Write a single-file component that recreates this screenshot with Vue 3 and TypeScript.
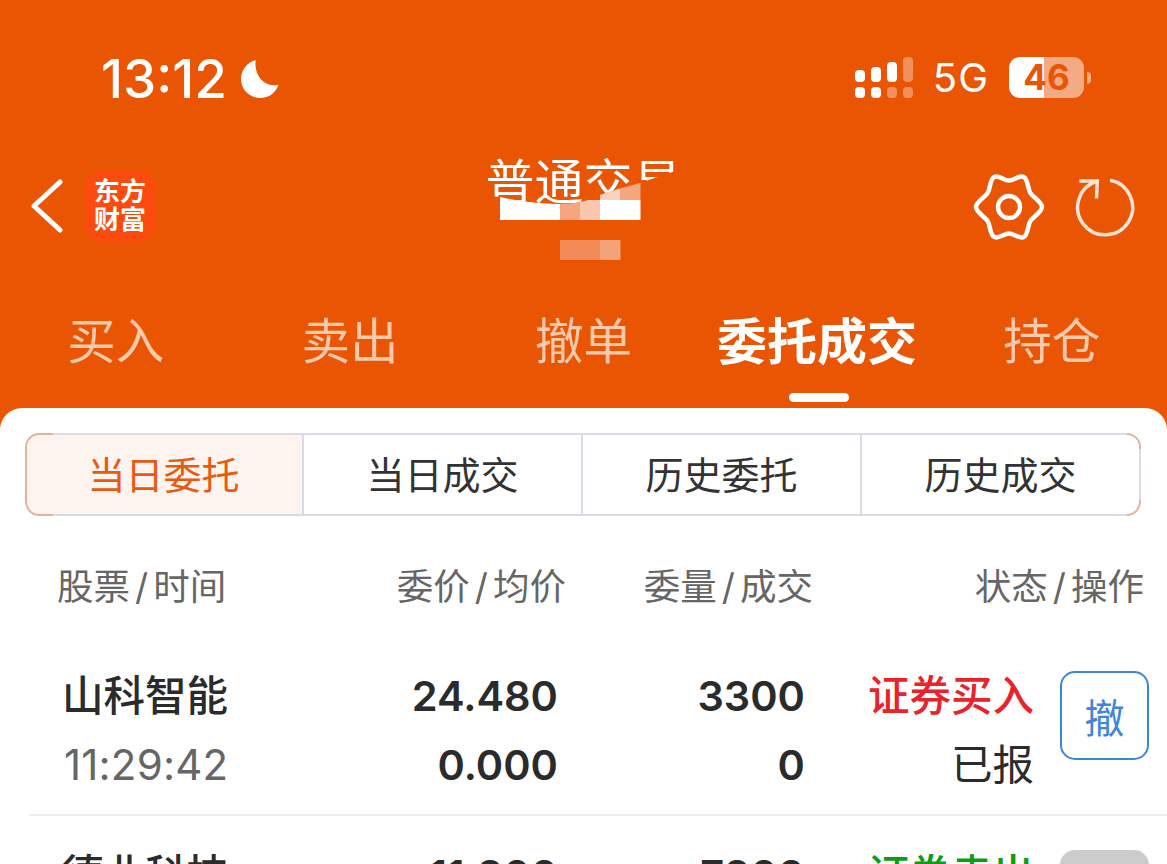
<template>
  <div class="page">
    <header class="top">
      <div class="status">
        <div class="clock">
          <span>13:12</span>
          <svg class="moon" viewBox="0 0 40 40"><path d="M15 .5C6 3 0 11 0 20c0 11 9 19.500 20 19.500 8.500 0 15.500-5 18.500-13.500C26 29 13 18 15 .5Z" /></svg>
        </div>
        <div class="indicators">
          <div class="signal">
            <div v-for="(bar, i) in signalBars" :key="i" class="signal-col">
              <i :class="{ dim: bar.topDim }" :style="{ height: bar.top + 'px' }"></i>
              <i :class="{ dim: bar.bottomDim }" class="dot"></i>
            </div>
          </div>
          <span class="net">5G</span>
          <div class="battery"><span>46</span></div>
          <i class="battery-tip"></i>
        </div>
      </div>

      <div class="nav">
        <div class="nav-left">
          <svg class="back" viewBox="0 0 32 54"><path d="M29 3 3 27l26 24" /></svg>
          <div class="logo"><span>东方</span><span>财富</span></div>
        </div>
        <div class="title">
          <span>普通交易</span>
          <!-- 打码区域盖在标题上 -->
          <svg class="mosaic" viewBox="470 160 220 110">
            <defs>
              <clipPath id="swoosh"><path :d="maskEdge + ' L690 270 L470 270 Z'" /></clipPath>
            </defs>
            <path :d="maskEdge + ' L690 270 L470 270 Z'" fill="#ea5504" />
            <g clip-path="url(#swoosh)">
              <rect v-for="c in mosaicCells" :key="c.x + '-' + c.y" :x="c.x" :y="c.y" width="20.5" height="20" :fill="c.fill" />
            </g>
          </svg>
        </div>
        <div class="nav-right">
          <svg class="gear" viewBox="-37 -37 74 74"><path :d="gearPath" /><circle r="11" /></svg>
          <svg class="refresh" viewBox="0 0 64 64">
            <path d="M38 5.300A27.500 27.500 0 1 1 25.300 6" />
            <path d="M7.300 6h18l-.8 17.500" />
          </svg>
        </div>
      </div>

      <nav class="tabs">
        <div v-for="tab in tabs" :key="tab" class="tab" :class="{ active: tab === activeTab }">{{ tab }}</div>
      </nav>
    </header>

    <main class="sheet">
      <div class="segments">
        <div v-for="(seg, i) in segments" :key="seg" class="segment" :class="{ on: i === 0 }">{{ seg }}</div>
      </div>

      <div class="thead">
        <div v-for="h in headers" :key="h[0]" class="th">{{ h[0] }}<em>/</em>{{ h[1] }}</div>
      </div>

      <div v-for="row in orders" :key="row.name" class="order">
        <div class="cell left">
          <b class="name">{{ row.name }}</b>
          <span class="time">{{ row.time }}</span>
        </div>
        <div class="cell num"><b>{{ row.price }}</b><b>{{ row.avg }}</b></div>
        <div class="cell num qty"><b>{{ row.qty }}</b><b>{{ row.filled }}</b></div>
        <div class="cell state">
          <b :class="row.side === '证券买入' ? 'buy' : 'sell'">{{ row.side }}</b>
          <span>{{ row.status }}</span>
        </div>
        <div class="cancel" :class="{ off: !row.canCancel }">{{ row.canCancel ? '撤' : '' }}</div>
      </div>
    </main>
  </div>
</template>

<script setup lang="ts">
const tabs = ['买入', '卖出', '撤单', '委托成交', '持仓']
const activeTab = '委托成交'
const segments = ['当日委托', '当日成交', '历史委托', '历史成交']
const headers = [
  ['股票', '时间'],
  ['委价', '均价'],
  ['委量', '成交'],
  ['状态', '操作']
]

const orders = [
  { name: '山科智能', time: '11:29:42', price: '24.480', avg: '0.000', qty: '3300', filled: '0', side: '证券买入', status: '已报', canCancel: true },
  { name: '德业科技', time: '10:12:08', price: '11.800', avg: '0.000', qty: '7800', filled: '0', side: '证券卖出', status: '已成', canCancel: false }
]

const signalBars = [
  { top: 12, topDim: false, bottomDim: false },
  { top: 15, topDim: false, bottomDim: false },
  { top: 20, topDim: false, bottomDim: true },
  { top: 25, topDim: true, bottomDim: true }
]

const maskEdge = 'M470 194 L500 197 Q530 204 560 204 Q584 204 600 195 Q620 188 640 183 L690 166'

const mosaicCells = [
  { x: 500, y: 190, fill: '#fff' }, { x: 520, y: 190, fill: '#fff' }, { x: 540, y: 190, fill: '#fff' },
  { x: 600, y: 180, fill: '#fbd3bd' }, { x: 620, y: 180, fill: '#f5a67e' },
  { x: 500, y: 200, fill: '#fff' }, { x: 520, y: 200, fill: '#fff' }, { x: 540, y: 200, fill: '#fff' },
  { x: 560, y: 200, fill: '#f5a67e' }, { x: 580, y: 200, fill: '#f9c7ae' },
  { x: 600, y: 200, fill: '#fff' }, { x: 620, y: 200, fill: '#fff' },
  { x: 560, y: 240, fill: '#f18c58' }, { x: 580, y: 240, fill: '#f18c58' }, { x: 600, y: 240, fill: '#f4a27a' }
]

// 齿轮轮廓：[角度, 半径]，齿顶齿根交替，切线方向连成波浪
const gearPoints = [
  [0, 33], [33, 25.5], [64, 33.5], [90, 26.5], [116, 33.5], [147, 25.5],
  [180, 33], [213, 25.5], [244, 33.5], [270, 26.5], [296, 33.5], [327, 25.5]
]

function buildGear(k: number): string {
  const pts = gearPoints.map(([deg, r]) => {
    const a = (deg * Math.PI) / 180
    return { x: r * Math.cos(a), y: r * Math.sin(a), tx: -Math.sin(a), ty: Math.cos(a) }
  })
  let d = `M${pts[0].x.toFixed(1)} ${pts[0].y.toFixed(1)}`
  pts.forEach((p, i) => {
    const n = pts[(i + 1) % pts.length]
    d += `C${(p.x + p.tx * k).toFixed(1)} ${(p.y + p.ty * k).toFixed(1)} ${(n.x - n.tx * k).toFixed(1)} ${(n.y - n.ty * k).toFixed(1)} ${n.x.toFixed(1)} ${n.y.toFixed(1)}`
  })
  return d + 'Z'
}
const gearPath = buildGear(5)
</script>

<style>
html,
body {
  margin: 0;
  overflow: hidden;
  background: #fff;
}
</style>

<style scoped>
.page {
  width: 1167px;
  height: 864px;
  overflow: hidden;
  background: #ea5504;
  font-family: Inter, "Noto Sans CJK SC", sans-serif;
  color: #2b2b2b;
}
.top {
  color: #fff;
}

.status {
  height: 150px;
  box-sizing: border-box;
  padding: 50px 76px 0 101px;
  display: flex;
  justify-content: space-between;
  align-items: flex-start;
}
.clock {
  display: flex;
  align-items: center;
  gap: 14px;
  font-size: 53px;
  font-weight: 500;
  line-height: 56px;
}
.clock span {
  padding-top: 1px;
}
.moon {
  width: 39px;
  height: 40px;
  fill: #fff;
}
.indicators {
  display: flex;
  align-items: center;
  height: 41px;
  margin-top: 7px;
}
.signal {
  display: flex;
  gap: 6px;
  align-items: flex-end;
  margin-right: 20px;
}
.signal-col {
  display: flex;
  flex-direction: column;
  gap: 5px;
  width: 10px;
}
.signal-col i {
  display: block;
  background: #fff;
  border-radius: 4px;
}
.signal-col .dot {
  height: 11px;
}
.signal-col .dim {
  background: rgba(255, 255, 255, 0.35);
}
.net {
  font-size: 40px;
  letter-spacing: 1px;
  line-height: 41px;
  margin-right: 20px;
}
.battery {
  width: 75px;
  height: 41px;
  border-radius: 11px;
  background: linear-gradient(90deg, #fff 35px, rgba(255, 255, 255, 0.5) 35px);
  color: #ea5504;
  font-size: 35px;
  font-weight: 700;
  line-height: 41px;
  text-align: center;
}
.battery-tip {
  width: 4px;
  height: 12px;
  margin-left: 3px;
  border-radius: 0 4px 4px 0;
  background: rgba(255, 255, 255, 0.5);
}

.nav {
  height: 122px;
  display: grid;
  grid-template-columns: 1fr auto 1fr;
  align-items: flex-start;
}
.nav-left {
  display: flex;
  align-items: center;
  gap: 22px;
  padding: 21px 0 0 31px;
}
.back {
  width: 32px;
  height: 54px;
  fill: none;
  stroke: #fff;
  stroke-width: 5;
  stroke-linecap: round;
  stroke-linejoin: round;
}
.logo {
  width: 70px;
  height: 70px;
  border-radius: 16px;
  background: #fd4a0e;
  display: flex;
  flex-direction: column;
  align-items: center;
  justify-content: center;
  font-size: 26px;
  font-weight: 700;
  line-height: 28px;
}
.title {
  position: relative;
  width: 196px;
  font-size: 49px;
  line-height: 60px;
  white-space: nowrap;
  margin-top: 3px;
}
.mosaic {
  position: absolute;
  left: -15.500px;
  top: 7px;
  width: 220px;
  height: 110px;
}
.nav-right {
  display: flex;
  justify-content: flex-end;
  align-items: center;
  gap: 31px;
  padding: 20px 31px 0 0;
}
.gear {
  width: 74px;
  height: 74px;
  margin-right: -5px;
  fill: none;
  stroke: #fff;
  stroke-width: 4.500;
}
.refresh {
  width: 64px;
  height: 64px;
  fill: none;
  stroke: #fbe3d6;
  stroke-width: 3.500;
}

.tabs {
  display: grid;
  grid-template-columns: repeat(5, 1fr);
  height: 136px;
}
.tab {
  position: relative;
  text-align: center;
  font-size: 48.500px;
  line-height: 96px;
  padding-top: 22px;
  color: #f9c9ac;
}
.tab:first-child {
  padding-right: 2px;
}
.tab:last-child {
  padding-left: 3px;
}
.tab.active {
  color: #fff;
  font-size: 50px;
  font-weight: 700;
}
.tab.active::after {
  content: "";
  position: absolute;
  left: 50%;
  top: 121px;
  width: 60px;
  height: 9px;
  margin-left: -28px;
  border-radius: 5px;
  background: #fff;
}

.sheet {
  background: #fff;
  border-radius: 22px 22px 0 0;
  height: 456px;
  padding-top: 25px;
  box-sizing: border-box;
  overflow: hidden;
}
.segments {
  position: relative;
  display: grid;
  grid-template-columns: repeat(4, 1fr);
  margin: 0 26px 0 25px;
  height: 83px;
  border-radius: 14px;
  overflow: hidden;
}
.segments::before,
.segments::after {
  content: "";
  position: absolute;
  top: 0;
  height: 100%;
  box-sizing: border-box;
  border: 2px solid #e3b29b;
}
.segments::before {
  left: 0;
  width: 28px;
  border-right: 0;
  border-radius: 14px 0 0 14px;
}
/* 右侧只有两个圆角带橙色，中段仍是灰边 */
.segments::after {
  right: 0;
  width: 14px;
  border-left: 0;
  border-radius: 0 14px 14px 0;
  -webkit-mask-image: linear-gradient(#000 16px, transparent 16px, transparent 67px, #000 67px);
  mask-image: linear-gradient(#000 16px, transparent 16px, transparent 67px, #000 67px);
}
.segment {
  display: flex;
  align-items: center;
  justify-content: center;
  padding-bottom: 5px;
  font-size: 38px;
  color: #333;
  border: 2px solid #d9dce6;
  border-left: 0;
  box-sizing: border-box;
}
.segment.on {
  background: #fdf4f0;
  color: #e85a10;
}

.thead {
  display: grid;
  grid-template-columns: 167px 342px 247px 331px;
  margin: 47px 24px 26px 57px;
  height: 48px;
}
.th {
  font-size: 36.500px;
  line-height: 48px;
  color: #666;
  text-align: right;
  white-space: nowrap;
}
.th:first-child {
  text-align: left;
}
.th em {
  font-style: normal;
  margin: 0 5px;
}

.order {
  display: flex;
  align-items: center;
  height: 179px;
  margin-left: 29px;
  padding: 10px 18px 0 35px;
  border-bottom: 2px solid #eeeeee;
  box-sizing: border-box;
}
.cell {
  display: flex;
  flex-direction: column;
  gap: 19px;
  font-size: 41.500px;
  line-height: 50px;
  white-space: nowrap;
}
.left {
  width: 200px;
}
.name {
  font-weight: 500;
  margin-left: -2px;
}
.time {
  color: #666;
  font-size: 42px;
  letter-spacing: 0.2px;
}
.num {
  width: 294px;
  text-align: right;
}
.num b {
  font-weight: 600;
}
.qty {
  width: 247px;
}
.state {
  width: 229px;
  text-align: right;
}
.state b {
  font-weight: 500;
}
.buy {
  color: #e8232a;
}
.sell {
  color: #0d9c14;
}
.cancel {
  width: 89px;
  height: 89px;
  box-sizing: border-box;
  margin: 0 0 30px 26px;
  border: 2px solid #3f86d6;
  border-radius: 15px;
  color: #3f86d6;
  font-size: 40px;
  display: flex;
  align-items: center;
  justify-content: center;
}
.cancel.off {
  background: #cccccc;
  border-color: #cccccc;
}
</style>
